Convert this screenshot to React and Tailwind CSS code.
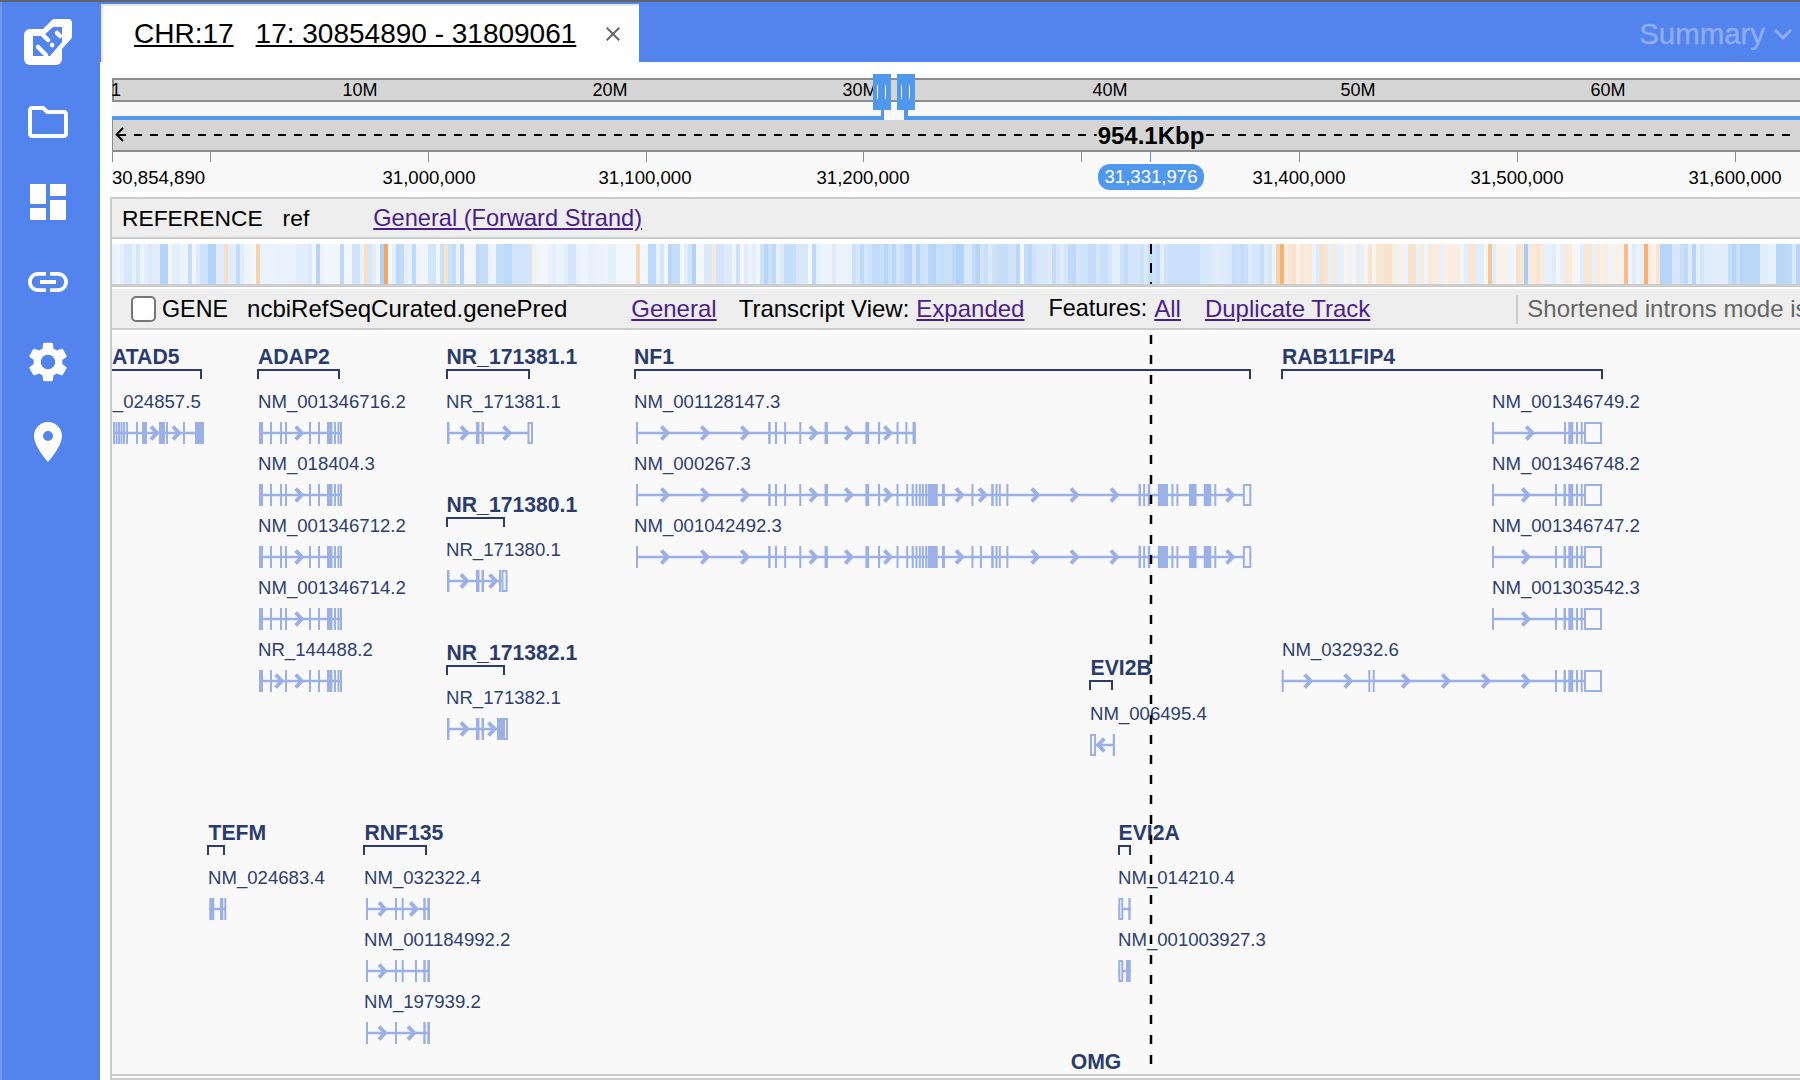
import { MdClose, MdDashboard, MdKeyboardArrowDown, MdLink, MdOutlineFolder, MdPlace, MdSettings } from "react-icons/md";

const PANEL_X = 112;
const PANEL_Y = 333;
const EXON = "#9bb0e6";

// heat strip: 4px bins, blue on the left, pale orange towards the right
function buildStrip() {
  let seed = 1337;
  const rand = () => {
    seed = (seed * 1664525 + 1013904223) % 4294967296;
    return seed / 4294967296;
  };
  const mix = (a, b, t) => a.map((v, i) => Math.round(v + (b[i] - v) * t));
  const blue = (t) => `rgb(${mix([243, 247, 253], [168, 205, 247], t)})`;
  const orange = (t) => `rgb(${mix([249, 246, 241], [245, 165, 92], t)})`;
  const accents = { 224: 0.3, 259: 0.45, 366: 0.3, 385: 1, 447: 0.25, 534: 0.08, 636: 0.4, 712: 0.15, 1276: 0.45, 1280: 0.85, 1490: 0.6, 1626: 0.7, 1646: 0.85 };
  const bins = [];
  let v = 0.4;
  for (let x = PANEL_X; x < 1800; x += 4) {
    v = rand() < 0.75 ? rand() : v;
    let fill;
    if (x >= 1270 && x < 1660) {
      fill = rand() < 0.6 ? orange(v * 0.25) : blue(v * 0.3);
    } else if (x > 1020 && x < 1270) {
      fill = blue(0.2 + v * 0.55);
    } else if (x > 850 && x < 1020) {
      fill = blue(0.3 + v * 0.6);
    } else if (x >= 1660) {
      fill = blue(0.15 + v * 0.7);
    } else {
      fill = blue(v * v * 0.9);
    }
    bins.push({ x, fill });
  }
  Object.entries(accents).forEach(([pos, t]) => {
    const bin = bins.find((b) => b.x + 4 > Number(pos));
    if (bin) bin.fill = orange(t);
  });
  const cut = bins.find((b) => b.x + 4 > 1527);
  if (cut) cut.fill = blue(1);
  return bins;
}
const stripBins = buildStrip();

const nf = (z) => 620 + z / 2.376;
const nfRange = (list) => list.map(([a, b]) => [nf(a), nf(b)]);

const nfHead = [[38, 42], [352, 358], [368, 373], [390, 394], [426, 430], [486, 494], [583, 592], [613, 618], [657, 660]];
const nfBody = [[680, 684], [693, 698], [702, 706], [710, 714], [717, 722], [725, 729], [731, 755], [765, 772], [835, 838]];
const nfTail = [[882, 888], [892, 897], [900, 904], [918, 921], [1232, 1238], [1243, 1247], [1254, 1260], [1278, 1302], [1310, 1315], [1322, 1325], [1352, 1370], [1387, 1405], [1412, 1415]];

const adap = [[259, 263], [270, 271.5], [280, 282], [285, 286.5], [309, 310.5], [318, 320], [327, 332.5], [334, 336], [337.5, 339], [340, 342]];
const adapNr = [[259, 263], [270, 271.5], [285, 286.5], [309, 310.5], [318, 320], [327, 332.5], [334, 336], [337.5, 339], [340, 342]];
const rabEnd = [[1555, 1556.5], [1563.5, 1566], [1568.3, 1573.3], [1576, 1577.3], [1580.7, 1582.7]];
const rabShort = [[1564, 1566], [1568.3, 1573.3], [1576, 1577.3], [1580.7, 1582.7]];
const rabBox = [[1584, 1602]];
const rnfEnd = [[423.3, 425.7], [427.3, 430]];

const genes = [
  { name: "ATAD5", x: 112, y: 356, from: 112, to: 202, noLeft: true },
  { name: "ADAP2", x: 258, y: 356, from: 257, to: 340 },
  { name: "NR_171381.1", x: 446.5, y: 356, from: 446, to: 530 },
  { name: "NR_171380.1", x: 446.5, y: 504, from: 446, to: 505 },
  { name: "NR_171382.1", x: 446.5, y: 652, from: 446, to: 505 },
  { name: "NF1", x: 634, y: 356, from: 634, to: 1251 },
  { name: "RAB11FIP4", x: 1282, y: 356, from: 1281, to: 1603 },
  { name: "EVI2B", x: 1090.5, y: 667, from: 1089, to: 1113 },
  { name: "TEFM", x: 208.5, y: 832, from: 207, to: 225 },
  { name: "RNF135", x: 364.5, y: 832, from: 363, to: 427 },
  { name: "EVI2A", x: 1118.5, y: 832, from: 1118, to: 1131 },
  { name: "OMG", x: 1070.7, y: 1061 },
];

const transcripts = [
  { label: "NM_024857.5", x: 83.9, y: 402, exons: [[113, 114.5], [115.5, 117], [118, 119.5], [120.5, 122], [123, 124.5], [126, 127], [136, 138], [142, 147], [159, 165], [166, 168], [183, 184.5], [195, 204]], tips: [158, 180] },
  { label: "NM_001346716.2", x: 258, y: 402, exons: adap, tips: [302.7] },
  { label: "NM_018404.3", x: 258, y: 464, exons: adap, tips: [302.7] },
  { label: "NM_001346712.2", x: 258, y: 526, exons: adap, tips: [302.7] },
  { label: "NM_001346714.2", x: 258, y: 588, exons: adap, tips: [302.7] },
  { label: "NR_144488.2", x: 258, y: 650, exons: adapNr, tips: [282.7, 302.7] },
  { label: "NR_171381.1", x: 446, y: 402, exons: [[447, 449.5], [476, 479.5], [481.5, 484]], boxes: [[527.5, 533]], tips: [468, 510.5] },
  { label: "NR_171380.1", x: 446, y: 550, exons: [[447, 449.5], [476, 479.5], [481.5, 484], [499, 501]], boxes: [[501.5, 507.5]], tips: [468, 496.7] },
  { label: "NR_171382.1", x: 446, y: 698, exons: [[447, 449.5], [476, 479.5], [481.5, 484], [497, 503]], boxes: [[503, 508]], tips: [468, 495.5] },
  { label: "NM_001128147.3", x: 634, y: 402, exons: nfRange([...nfHead, [678, 682], [695, 703]]), tips: [115, 210, 305, 468, 552, 645].map(nf) },
  { label: "NM_000267.3", x: 634, y: 464, exons: nfRange([...nfHead, ...nfBody, ...nfTail]), boxes: nfRange([[1480, 1500]]), tips: [115, 210, 305, 468, 552, 645, 815, 870, 995, 1088, 1183, 1458].map(nf) },
  { label: "NM_001042492.3", x: 634, y: 526, exons: nfRange([...nfHead, ...nfBody, [855, 860], ...nfTail]), boxes: nfRange([[1480, 1500]]), tips: [115, 210, 305, 468, 552, 645, 815, 995, 1088, 1183, 1458].map(nf) },
  { label: "NM_001346749.2", x: 1492, y: 402, exons: [[1492, 1493.5], ...rabShort], boxes: rabBox, tips: [1533.3] },
  { label: "NM_001346748.2", x: 1492, y: 464, exons: [[1492, 1493.5], ...rabEnd], boxes: rabBox, tips: [1529.3] },
  { label: "NM_001346747.2", x: 1492, y: 526, exons: [[1492, 1493.5], ...rabEnd], boxes: rabBox, tips: [1529.3] },
  { label: "NM_001303542.3", x: 1492, y: 588, exons: [[1492, 1493.5], ...rabEnd], boxes: rabBox, tips: [1529.3] },
  { label: "NM_032932.6", x: 1282, y: 650, exons: [[1281.7, 1283], [1368.3, 1370], [1372.7, 1374.7], ...rabEnd], boxes: rabBox, tips: [1311.7, 1351.7, 1409.3, 1449.3, 1489.3, 1529.3] },
  { label: "NM_006495.4", x: 1090, y: 714, exons: [[1112.7, 1115]], boxes: [[1090, 1096]], tips: [1098.3], back: true },
  { label: "NM_014210.4", x: 1118, y: 878, exons: [[1128.3, 1130.7]], boxes: [[1118.3, 1123.3]], tips: [] },
  { label: "NM_001003927.3", x: 1118, y: 940, exons: [[1126, 1130.7]], boxes: [[1118.3, 1123.3]], tips: [] },
  { label: "NM_024683.4", x: 208, y: 878, exons: [[209.3, 214.3], [220, 223.3], [224.3, 226]], tips: [] },
  { label: "NM_032322.4", x: 364, y: 878, exons: [[366, 367.7], [395, 396.7], [401.7, 403.3], ...rnfEnd], tips: [386, 417.3] },
  { label: "NM_001184992.2", x: 364, y: 940, exons: [[366, 367.7], [395, 396.7], [401.7, 403.3], [415, 416.7], ...rnfEnd], tips: [386] },
  { label: "NM_197939.2", x: 364, y: 1002, exons: [[366, 367.7], [395, 396.7], ...rnfEnd], tips: [386, 415] },
];

const chromLabels = [["10M", 360], ["20M", 610], ["30M", 860], ["40M", 1110], ["50M", 1358], ["60M", 1608]];
const zoomTicks = [210, 428, 646, 863, 1081, 1299, 1517, 1735];
const zoomLabels = [["31,000,000", 429], ["31,100,000", 645], ["31,200,000", 863], ["31,400,000", 1299], ["31,500,000", 1517], ["31,600,000", 1735]];

function Logo() {
  return (
    <svg viewBox="24 18 48 48" className="h-12 w-12">
      <rect x="24" y="29" width="38" height="36" rx="6" fill="#fff" />
      <path d="M43 29 L52 20 Q53 19 55 19 L68 19 Q72 19 72 23 L72 36 Q72 38 71 39 L62 49 Z" fill="#fff" />
      <path d="M33 36 L43 36 L53 27 L62 27 L62 42 L50 56 L33 56 Z" fill="#5383ec" />
      <g stroke="#fff" strokeWidth="4.5" strokeLinecap="round" fill="none">
        <path d="M40 32 L48 40" />
        <path d="M38 47 L46 55" />
        <path d="M57 33 L60 36" />
        <path d="M52 45 L52.1 45.1" />
      </g>
    </svg>
  );
}

function Sidebar() {
  return (
    <div className="flex w-[100px] shrink-0 flex-col gap-8 border-l-2 border-[#6f98f0] bg-[#5383ec] pl-[22px] pt-4 text-white">
      <Logo />
      <MdOutlineFolder size={48} />
      <MdDashboard size={48} />
      <MdLink size={48} />
      <MdSettings size={48} />
      <MdPlace size={48} />
    </div>
  );
}

function Header() {
  return (
    <div className="flex h-[60px] shrink-0 items-end bg-[#5383ec]">
      <div className="ml-px flex h-[58px] w-[538px] items-center border-l-2 border-t-2 border-[#e6e6e6] bg-white pl-[31px] text-[28px] text-black">
        <span className="underline underline-offset-2">CHR:17</span>
        <span className="ml-[22px] underline underline-offset-2">17: 30854890 - 31809061</span>
        <MdClose size={24} className="ml-[25px] text-[#666]" />
      </div>
      <div className="ml-auto mt-1 flex items-center self-center text-[29.4px] text-[#8fadf5] [-webkit-text-stroke:0.4px_#8fadf5]">
        <span>Summary</span>
        <MdKeyboardArrowDown size={36} className="-mr-px" />
      </div>
    </div>
  );
}

function Rulers() {
  return (
    <div className="relative ml-3 h-[118px] shrink-0 bg-[#f9f9f9] text-[18.6px] leading-5 text-black">
      {/* chromosome overview */}
      <div className="mt-1 h-6 border-y-2 border-l-2 border-[#8c8c8c] bg-[#d5d5d5]" />
      <span className="absolute -left-px top-[6px] text-[18px]">1</span>
      {chromLabels.map(([text, x]) => (
        <span key={text} className="absolute top-[6px] -translate-x-1/2 text-[18px]" style={{ left: x - PANEL_X }}>
          {text}
        </span>
      ))}
      {/* selected region handles */}
      {[873, 897].map((x) => (
        <div key={x} className="absolute top-0 h-9 w-[18px] bg-[#4f98ee]" style={{ left: x - PANEL_X }}>
          <div className="absolute left-[4px] top-[11px] h-[14px] w-px bg-white" />
          <div className="absolute left-[12px] top-[11px] h-[14px] w-px bg-white" />
        </div>
      ))}
      {/* zoomed region */}
      <div className="relative mt-[14px] h-9 border-b-2 border-l border-t-4 border-b-[#8c8c8c] border-l-[#8c8c8c] border-t-[#4f98ee] bg-[#d5d5d5]">
        <svg className="absolute left-0 top-0 h-[30px] w-full" fill="none">
          <path d="M10 8 L3.5 14.5 L10 21" stroke="#000" strokeWidth="1.8" />
          <line x1="5" y1="15" x2="1680" y2="15" stroke="#000" strokeWidth="2" strokeDasharray="8 8" />
        </svg>
        <span className="absolute top-[2px] -translate-x-1/2 bg-[#d5d5d5] px-px text-[24px] font-bold leading-7" style={{ left: 1151 - PANEL_X - 1 }}>
          954.1Kbp
        </span>
      </div>
      <div className="absolute top-[42px] h-[4px] w-5 bg-[#f9f9f9]" style={{ left: 884 - PANEL_X }} />
      <div className="absolute top-[36px] h-[8px] w-[3px] bg-[#4f98ee]" style={{ left: 881 - PANEL_X }} />
      <div className="absolute top-[36px] h-[8px] w-1 bg-[#4f98ee]" style={{ left: 904 - PANEL_X }} />
      {/* ticks and labels */}
      {zoomTicks.map((x) => (
        <div key={x} className="absolute top-[78px] h-[10px] w-px bg-[#8c8c8c]" style={{ left: x - PANEL_X }} />
      ))}
      <div className="absolute left-0 top-[78px] h-[10px] w-px bg-[#8c8c8c]" />
      <span className="absolute left-0 top-[94px]">30,854,890</span>
      {zoomLabels.map(([text, x]) => (
        <span key={text} className="absolute top-[94px] -translate-x-1/2" style={{ left: x - PANEL_X }}>
          {text}
        </span>
      ))}
      <div className="absolute top-[78px] h-[10px] w-px bg-[#4f98ee]" style={{ left: 1150 - PANEL_X }} />
      <span className="absolute top-[90px] flex h-[26px] w-[106px] -translate-x-1/2 items-center justify-center rounded-[12px] bg-[#4f98ee] text-white" style={{ left: 1151 - PANEL_X }}>
        31,331,976
      </span>
    </div>
  );
}

function HeatStrip() {
  return (
    <svg className="mt-[5px] block h-10 w-full shrink-0" shapeRendering="crispEdges">
      {stripBins.map((bin) => (
        <rect key={bin.x} x={bin.x - PANEL_X} y="0" width="4" height="40" fill={bin.fill} />
      ))}
      <line x1={1151 - PANEL_X} y1="0" x2={1151 - PANEL_X} y2="40" stroke="#000" strokeWidth="2.5" strokeDasharray="10 9" />
    </svg>
  );
}

function Transcript({ label, x, y, exons, boxes = [], tips, back }) {
  const all = [...exons, ...boxes];
  const left = Math.floor(Math.min(...all.map((e) => e[0]), ...tips) - 8);
  const right = Math.ceil(Math.max(...all.map((e) => e[1]), ...tips) + 2);
  const lineFrom = Math.min(...all.map((e) => e[0])) - left;
  const lineTo = Math.max(...all.map((e) => e[1])) - left;
  return (
    <>
      <span className="absolute whitespace-nowrap text-[18.6px] leading-5 text-[#2d3f6f]" style={{ left: x - PANEL_X, top: y - PANEL_Y - 10 }}>
        {label}
      </span>
      <svg className="absolute" width={right - left} height="22" style={{ left: left - PANEL_X, top: y + 20 - PANEL_Y }}>
        <rect x={lineFrom} y="9.75" width={lineTo - lineFrom} height="2.5" fill={EXON} />
        {exons.map(([a, b]) => (
          <rect key={a} x={a - left} y="0" width={Math.max(b - a, 2)} height="22" fill={EXON} />
        ))}
        {boxes.map(([a, b]) => (
          <rect key={a} x={a - left + 1} y="1" width={b - a - 2} height="20" fill="#f9f9f9" stroke={EXON} strokeWidth="2" />
        ))}
        {tips.map((t) => (
          <polyline
            key={t}
            points={back ? `${t - left + 6},4.5 ${t - left},11 ${t - left + 6},17.5` : `${t - left - 7},4.5 ${t - left - 1},11 ${t - left - 7},17.5`}
            fill="none"
            stroke={EXON}
            strokeWidth="4"
          />
        ))}
      </svg>
    </>
  );
}

function Gene({ name, x, y, from, to, noLeft }) {
  return (
    <>
      <span className="absolute whitespace-nowrap text-[21.2px] font-bold leading-6 text-[#2a3c6d]" style={{ left: x - PANEL_X, top: y - PANEL_Y - 11 }}>
        {name}
      </span>
      {to && (
        <div
          className={noLeft ? "absolute h-[10px] border-r-2 border-t-2 border-[#2a3c6d]" : "absolute h-[10px] border-x-2 border-t-2 border-[#2a3c6d]"}
          style={{ left: from - PANEL_X, top: y + 13 - PANEL_Y, width: to - from }}
        />
      )}
    </>
  );
}

function TrackPanel() {
  return (
    <div className="relative mt-[3px] min-h-0 flex-1 overflow-hidden bg-[#f9f9f9]">
      {genes.map((gene) => (
        <Gene key={gene.name + gene.y} {...gene} />
      ))}
      {transcripts.map((t) => (
        <Transcript key={t.label} {...t} />
      ))}
      <svg className="absolute top-0 h-full w-1" style={{ left: 1151 - PANEL_X - 2 }}>
        <line x1="2" y1="2" x2="2" y2="731" stroke="#000" strokeWidth="2.5" strokeDasharray="9 11" />
      </svg>
    </div>
  );
}

function Link({ children, className }) {
  return <span className={`text-[#4b1f8a] underline underline-offset-2 ${className}`}>{children}</span>;
}

export default function App() {
  return (
    <div className="h-screen w-screen overflow-hidden border-t-2 border-[#5f6368] bg-white font-['Liberation_Sans',Arial,sans-serif]">
      <div className="flex h-[1078px]">
        <Sidebar />
        <div className="flex min-w-0 flex-1 flex-col">
          <Header />
          <div className="flex min-h-0 flex-1 flex-col overflow-hidden pt-3">
            <Rulers />
            <div className="ml-[10px] mt-[5px] flex min-h-0 flex-1 flex-col border-l-2 border-[#cccccc]">
              <div className="flex h-[42px] shrink-0 items-center whitespace-nowrap border-y-2 border-[#cccccc] bg-[#eeeeee] pl-[10px] pt-px text-[22.8px] text-black">
                <span>REFERENCE</span>
                <span className="ml-[20px]">ref</span>
                <Link className="ml-[64px] text-[23.6px]">General (Forward Strand)</Link>
              </div>
              <HeatStrip />
              <div className="h-[3px] shrink-0 bg-[#cccccc]" />
              <div className="mt-[2px] flex h-[41px] shrink-0 items-center whitespace-nowrap border-b-2 border-[#cccccc] bg-[#eeeeee] pl-[19px] pt-px text-[24px] text-black">
                <span className="h-[26px] w-[25px] shrink-0 rounded-[5px] border-2 border-[#767676] bg-white" />
                <span className="ml-[6px] text-[23.3px]">GENE</span>
                <span className="ml-[19px]">ncbiRefSeqCurated.genePred</span>
                <Link className="ml-[64px]">General</Link>
                <span className="ml-[22px]">Transcript View:</span>
                <Link className="ml-[7px]">Expanded</Link>
                <span className="ml-6 text-[23.4px]">Features:</span>
                <Link className="ml-[7px]">All</Link>
                <Link className="ml-6">Duplicate Track</Link>
                <span className="ml-[146px] flex h-[29px] items-center border-l-2 border-[#cccccc] pl-[9px] text-[#666666]">Shortened introns mode is on</span>
              </div>
              <TrackPanel />
              <div className="h-[2px] shrink-0 bg-[#cccccc]" />
              <div className="mt-[2px] h-[2px] shrink-0 bg-[#cccccc]" />
            </div>
          </div>
        </div>
      </div>
    </div>
  );
}
